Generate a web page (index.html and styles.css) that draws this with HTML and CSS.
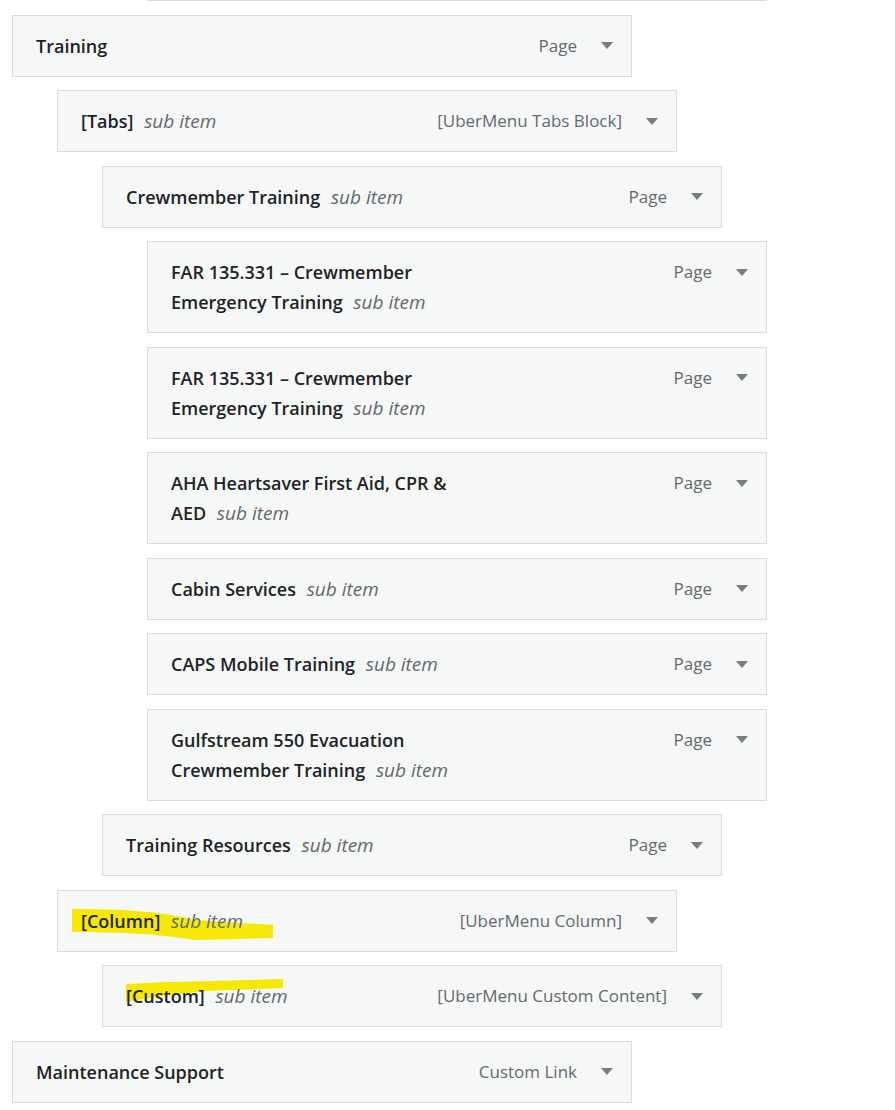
FILE: index.html
```html
<!DOCTYPE html>
<html lang="en">
<head>
    <meta charset="UTF-8">
    <meta name="viewport" content="width=device-width, initial-scale=1.0">
    <title>Menu Structure</title>
    <link rel="stylesheet" href="styles.css">
</head>
<body>
    <ul class="menu">
        <li class="item depth-3 stub">
            <div class="handle">
                <span class="title"><span class="name">&nbsp;</span></span>
            </div>
        </li>

        <li class="item depth-0">
            <div class="handle">
                <span class="title"><span class="name">Training</span></span>
                <span class="controls"><span class="type">Page</span><span class="arrow"></span></span>
            </div>
        </li>

        <li class="item depth-1">
            <div class="handle">
                <span class="title"><span class="name">[Tabs]</span> <span class="sub">sub item</span></span>
                <span class="controls"><span class="type">[UberMenu Tabs Block]</span><span class="arrow"></span></span>
            </div>
        </li>

        <li class="item depth-2">
            <div class="handle">
                <span class="title"><span class="name">Crewmember Training</span> <span class="sub">sub item</span></span>
                <span class="controls"><span class="type">Page</span><span class="arrow"></span></span>
            </div>
        </li>

        <li class="item depth-3">
            <div class="handle">
                <span class="title"><span class="name">FAR 135.331 – Crewmember Emergency Training</span> <span class="sub">sub item</span></span>
                <span class="controls"><span class="type">Page</span><span class="arrow"></span></span>
            </div>
        </li>

        <li class="item depth-3">
            <div class="handle">
                <span class="title"><span class="name">FAR 135.331 – Crewmember Emergency Training</span> <span class="sub">sub item</span></span>
                <span class="controls"><span class="type">Page</span><span class="arrow"></span></span>
            </div>
        </li>

        <li class="item depth-3">
            <div class="handle">
                <span class="title"><span class="name">AHA Heartsaver First Aid, CPR &amp; AED</span> <span class="sub">sub item</span></span>
                <span class="controls"><span class="type">Page</span><span class="arrow"></span></span>
            </div>
        </li>

        <li class="item depth-3">
            <div class="handle">
                <span class="title"><span class="name">Cabin Services</span> <span class="sub">sub item</span></span>
                <span class="controls"><span class="type">Page</span><span class="arrow"></span></span>
            </div>
        </li>

        <li class="item depth-3">
            <div class="handle">
                <span class="title"><span class="name">CAPS Mobile Training</span> <span class="sub">sub item</span></span>
                <span class="controls"><span class="type">Page</span><span class="arrow"></span></span>
            </div>
        </li>

        <li class="item depth-3">
            <div class="handle">
                <span class="title"><span class="name">Gulfstream 550 Evacuation Crewmember Training</span> <span class="sub">sub item</span></span>
                <span class="controls"><span class="type">Page</span><span class="arrow"></span></span>
            </div>
        </li>

        <li class="item depth-2">
            <div class="handle">
                <span class="title"><span class="name">Training Resources</span> <span class="sub">sub item</span></span>
                <span class="controls"><span class="type">Page</span><span class="arrow"></span></span>
            </div>
        </li>

        <li class="item depth-1">
            <div class="handle">
                <!-- marker highlight -->
                <svg class="marker" width="620" height="62" viewBox="0 0 620 62">
                    <path d="M15 19 C63 19 103 21 138 30 L216 35 L216 48 L138 50 C103 44 63 42 15 42 Z"/>
                </svg>
                <span class="title"><span class="name">[Column]</span> <span class="sub">sub item</span></span>
                <span class="controls"><span class="type">[UberMenu Column]</span><span class="arrow"></span></span>
            </div>
        </li>

        <li class="item depth-2">
            <div class="handle">
                <svg class="marker" width="620" height="62" viewBox="0 0 620 62">
                    <path d="M24 19 C45 18 60 17 75 17 L181 14 L181 23 L105 26 C70 30 45 33 24 37 Z"/>
                </svg>
                <span class="title"><span class="name">[Custom]</span> <span class="sub">sub item</span></span>
                <span class="controls"><span class="type">[UberMenu Custom Content]</span><span class="arrow"></span></span>
            </div>
        </li>

        <li class="item depth-0">
            <div class="handle">
                <span class="title"><span class="name">Maintenance Support</span></span>
                <span class="controls"><span class="type">Custom Link</span><span class="arrow"></span></span>
            </div>
        </li>
    </ul>
</body>
</html>
```

FILE: styles.css
```css
body { margin: 0; background: #fff; font-family: "Open Sans", "Noto Sans", sans-serif; color: #1d2327; }

.menu { list-style: none; margin: 0; padding: 0 0 0 12px; }
.item { margin-top: 13.5px; width: 620px; }
.item.stub { margin-top: -61px; }
.depth-1 { margin-left: 45px; }
.depth-2 { margin-left: 90px; }
.depth-3 { margin-left: 135px; }

.handle {
    position: relative;
    display: flex; justify-content: space-between; align-items: flex-start;
    box-sizing: border-box; width: 620px;
    padding: 15px 18px 15px 23px;
    background: #f6f7f7; border: 1px solid #dcdcde;
    line-height: 30px; font-size: 17px;
}

.title { position: relative; max-width: 305px; font-size: 18px; }
.name { font-weight: 600; color: #1d2327; }
.sub { margin-left: 6px; font-size: 19px; font-style: italic; color: #646970; vertical-align: top; }

.controls { position: relative; display: flex; align-items: center; white-space: nowrap; }
.type { color: #646970; }
.arrow {
    width: 0; height: 0; margin-left: 24px;
    border-left: 6px solid transparent; border-right: 6px solid transparent;
    border-top: 7px solid #787c82;
}

.marker { position: absolute; left: -1px; top: -1px; }
.marker path { fill: #f6e800; }
```
